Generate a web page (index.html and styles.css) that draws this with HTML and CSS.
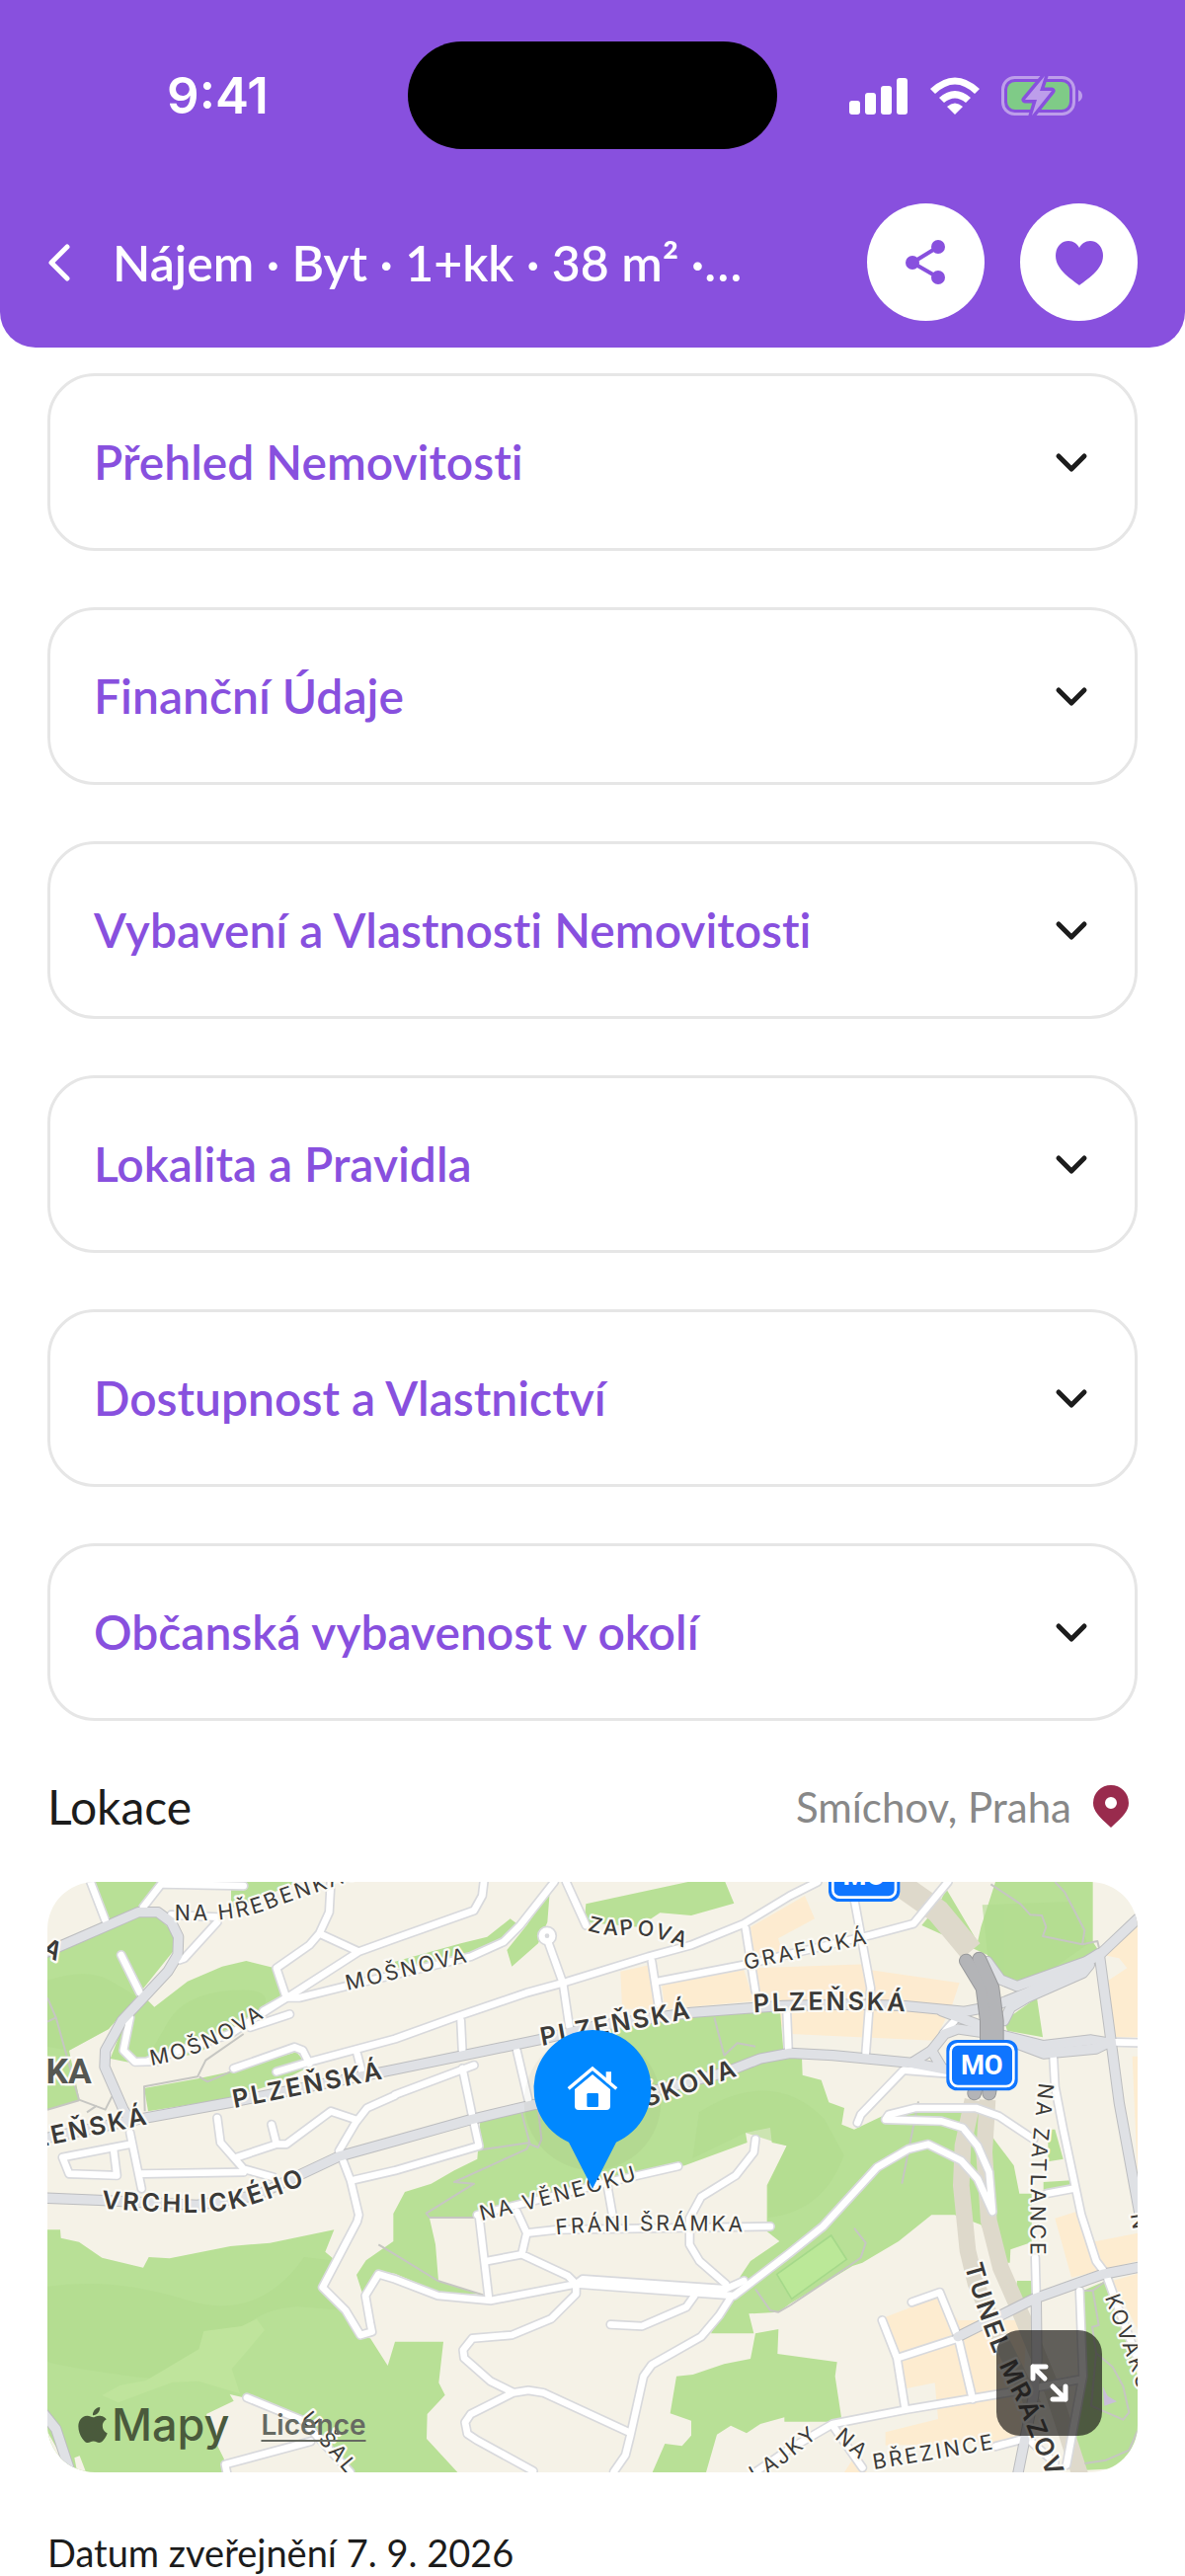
FILE: index.html
```html
<!DOCTYPE html>
<html lang="cs">
<head>
<meta charset="utf-8">
<meta name="viewport" content="width=device-width, initial-scale=1">
<title>Nájem · Byt · 1+kk · 38 m²</title>
<link rel="stylesheet" href="styles.css">
</head>
<body>
<svg class="defs" width="0" height="0" aria-hidden="true">
  <symbol id="chevron" viewBox="0 0 36 36"><path d="M5 12l13 13 13-13" fill="none" stroke="currentColor" stroke-width="5" stroke-linecap="round" stroke-linejoin="round"/></symbol>
</svg>

<header class="top">
  <div class="status">
    <time class="clock">9:41</time>
    <div class="island"></div>
    <div class="indicators">
      <svg width="60" height="40" viewBox="0 0 60 40" fill="#fff" aria-hidden="true">
        <rect x="0" y="25" width="11" height="14" rx="3"/><rect x="16" y="17" width="11" height="22" rx="3"/><rect x="32" y="10" width="11" height="29" rx="3"/><rect x="48" y="2" width="11" height="37" rx="3"/>
      </svg>
      <svg width="50" height="40" viewBox="0 0 50 40" fill="#fff" aria-hidden="true">
        <path d="M0 13Q25-10 50 13L45 18Q25-1 5 18Z"/><path d="M9 22Q25 8 41 22L36 27Q25 18 14 27Z"/><path d="M17 31Q25 24 33 31L25 39Z"/>
      </svg>
      <svg width="83" height="42" viewBox="0 0 83 42" aria-hidden="true">
        <rect x="1.500" y="2.500" width="72" height="37" rx="12" fill="none" stroke="#bd9eea" stroke-width="3"/>
        <path d="M78 15q4 2 4 6t-4 6z" fill="#bd9eea"/>
        <rect x="6" y="7" width="63" height="28" rx="8" fill="#7fcb87"/>
        <path d="M44 1L24 25h12l-5 16 20-25H39z" fill="#bd9eea" stroke="#8850de" stroke-width="7" stroke-linejoin="round" paint-order="stroke"/>
      </svg>
    </div>
  </div>
  <nav class="nav">
    <button class="back" type="button" aria-label="Zpět">
      <svg width="24" height="40" viewBox="0 0 24 40" aria-hidden="true"><path d="M20 4L4 20l16 16" fill="none" stroke="currentColor" stroke-width="5" stroke-linecap="round" stroke-linejoin="round"/></svg>
    </button>
    <h1 class="title">Nájem · Byt · 1+kk · 38 m² ·…</h1>
    <button class="round" type="button" aria-label="Sdílet">
      <svg width="48" height="48" viewBox="0 0 48 48" fill="currentColor" aria-hidden="true"><path d="M36 8L10 24l26 15" fill="none" stroke="currentColor" stroke-width="4"/><circle cx="10" cy="24" r="7"/><circle cx="36" cy="8" r="7"/><circle cx="36" cy="39" r="7"/></svg>
    </button>
    <button class="round" type="button" aria-label="Oblíbené">
      <svg width="48" height="48" viewBox="0 0 48 48" fill="currentColor" aria-hidden="true"><path d="M24 47C18 42 0 32 0 17 0 8 6 2 13 2c5 0 9 3 11 7 2-4 6-7 11-7 7 0 13 6 13 15 0 15-18 25-24 30z"/></svg>
    </button>
  </nav>
</header>

<main class="content">
  <div class="cards">
    <button class="card" type="button" aria-expanded="false"><span>Přehled Nemovitosti</span><svg class="chev" aria-hidden="true"><use href="#chevron"/></svg></button>
    <button class="card" type="button" aria-expanded="false"><span>Finanční Údaje</span><svg class="chev" aria-hidden="true"><use href="#chevron"/></svg></button>
    <button class="card" type="button" aria-expanded="false"><span>Vybavení a Vlastnosti Nemovitosti</span><svg class="chev" aria-hidden="true"><use href="#chevron"/></svg></button>
    <button class="card" type="button" aria-expanded="false"><span>Lokalita a Pravidla</span><svg class="chev" aria-hidden="true"><use href="#chevron"/></svg></button>
    <button class="card" type="button" aria-expanded="false"><span>Dostupnost a Vlastnictví</span><svg class="chev" aria-hidden="true"><use href="#chevron"/></svg></button>
    <button class="card" type="button" aria-expanded="false"><span>Občanská vybavenost v okolí</span><svg class="chev" aria-hidden="true"><use href="#chevron"/></svg></button>
  </div>

  <div class="location">
    <h2 class="heading">Lokace</h2>
    <p class="place">Smíchov, Praha
      <svg width="48" height="48" viewBox="0 0 48 48" aria-hidden="true"><path fill="#992b4d" fill-rule="evenodd" d="M24 2a18 18 0 0 1 18 18c0 8-5 13-18 25C11 33 6 28 6 20A18 18 0 0 1 24 2zm0 12a6 6 0 1 0 0 12 6 6 0 0 0 0-12z"/></svg>
    </p>
  </div>

  <div class="map">
    <svg class="canvas" viewBox="0 0 3312 1794" role="img" aria-label="Mapa okolí">
      <defs>
        <g id="streets">
          <path d="M131 0L176 117M351 0L291 77M351 7L596 12M376 100L516 107M516 122L416 232 401 237"/>
          <path d="M861 0L856 92 826 157 796 192 696 262 726 352M826 157L946 212 1056 172 1296 87 1321 42 1326 0M946 212L736 347 656 392"/>
          <path d="M726 352L766 352 906 317 1286 227 1386 182 1436 132 1540 0M616 442L736 402M336 545L266 547 231 512 251 412M224 222L281 337M726 352L556 462 306 544"/>
          <path d="M566 567L751 502 776 512 796 552M696 577L796 547 1056 477 1236 412 1456 337 1566 307 1826 227 1956 192 2116 127 2256 42 2340 0M941 522L956 580"/>
          <path d="M516 717L526 792 596 872 686 897M681 737L696 797 576 837M696 797L726 797 861 697 936 722M1056 649L971 687 936 732 886 817M1056 647L1296 557"/>
          <path d="M1256 422L1261 522M1261 567L1291 712 1311 802 1056 877 926 907"/>
          <path d="M896 842L921 907 946 1012 941 1032 836 1232 906 1302 951 1377 986 1367 981 1342 966 1257 1006 1192 1056 1207 1186 1257 1346 1272 1606 1222"/>
          <path d="M251 762L286 932M251 797L46 837 66 887 211 892 201 812M286 887L596 882"/>
          <path d="M1576 0L1636 132M1521 182L1566 307 1586 442M1836 242L1856 372M1856 302L2116 252 2500 162 2631 127 2736 0M2451 52L2501 322 2486 522M2121 142L2151 332M2246 392L2251 512M1426 512L1461 662"/>
          <path d="M1916 864L1706 912 1306 1012M1701 922L1716 1007M2151 782L2146 822 2091 892 1986 957 1951 1022 1951 1102 1981 1152 2061 1222M1311 1012L1341 1267"/>
          <path d="M1426 1002L1456 1067 1441 1132 1336 1152M1441 1132L1581 1197 1606 1222 1606 1252 1531 1327 1411 1377 1291 1387 1263 1422 1266 1447 1346 1517 1416 1552 1286 1617 1269 1642 1276 1677 1306 1697 1476 1790M1416 1552L1461 1545 1506 1552 1766 1672"/>
          <path d="M1456 1067L1546 1057 2196 1047M1606 1222L1626 1207 2061 1237 2116 1212M1606 1222L2081 1257"/>
          <path d="M2086 1257L2256 1127 2356 1047 2521 867 2616 812 2676 797 2776 847 2826 902 2871 1002 2861 882 2826 802 2781 747 2716 727 2546 722 2556 707 2636 687 2821 687 2891 712 2996 782"/>
          <path d="M2076 1262L2041 1317 1986 1382 1836 1467 1811 1502 1771 1682 1756 1742 1721 1792M1966 1257L1941 1292 1806 1350 1711 1345"/>
          <path d="M2461 732L2471 707 2601 572 2726 582M3056 532L3061 622 3086 752 3141 1012 3186 1152 3216 1192 3256 1302 3312 1450M3001 1142L3004 1252M3036 947L3116 932M3241 487L3320 489M2756 422L2722 460"/>
          <path d="M2626 1277L2711 1247 2766 1382 2811 1572M2536 1332L2581 1447 2606 1602M2581 1447L2766 1387M2150 1794L2256 1722 2386 1647 2606 1604 2946 1547 3136 1512M2386 1652L2476 1780M2880 1715L2976 1690 3060 1765M3136 1242L3146 1502 3096 1772"/>
          <path d="M606 1567L776 1637 920 1794M545 1794L540 1770 800 1700"/>
        </g>
        <g id="roads">
          <path d="M2856 242L2896 297 2946 317 3156 242 3196 217M2906 422L2926 382 2976 352 3146 277 3166 252M2686 512L2716 562M2626 550L2740 572"/>
          <path d="M-20 221L276 92 336 92 376 122 398 167 396 222 366 272 226 422 176 512 174 562 231 692 256 732"/>
          <path d="M-20 782L256 725 556 670 1056 570 1506 477 1656 440 1956 397 2236 376 2456 372 2606 377 2786 394 2876 377 2976 337 3196 222 3330 95"/>
          <path d="M-20 960L156 967 456 982 636 952 886 834 1056 787 1286 722 1476 677 1816 642 2056 580 2166 537 2256 520 2386 527 2626 550 2686 512 2726 462 2766 447 2906 467 3026 497 3171 480 3230 490"/>
          <path d="M2716 392L2836 437 2946 492 3026 522 3186 507 3226 487M3196 222L3231 482 3256 672 3320 1020M2766 1382L2996 1267 3206 1192 3330 1168M3004 1267L3006 1452 2996 1562 2946 1810M-14 1612L26 1662 75 1810"/>
        </g>
        <g id="tunnel"><path d="M2791 240L2841 322 2854 422 2854 500 2816 642"/><path d="M2831 234L2871 322 2884 422 2884 500 2861 642"/></g>
        <path id="p-hrebenky" d="M386 117L480 117Q600 115 700 72L1000-30"/>
        <path id="p-mosnova1" d="M316 557Q480 535 690 390"/>
        <path id="p-mosnova2" d="M911 330L1330 230"/>
        <path id="p-plzen1" d="M568 687L1060 590"/>
        <path id="p-plzen2" d="M-260 856L312 735"/>
        <path id="p-vrch" d="M164 992Q400 1010 500 1002 640 995 870 875"/>
        <path id="p-zapova" d="M1640 147Q1700 168 1770 160 1860 160 1990 228"/>
        <path id="p-graf" d="M2121 267L2560 173"/>
        <path id="p-plzen3" d="M1502 498L1990 408"/>
        <path id="p-plzen4" d="M2146 397Q2400 380 2680 398"/>
        <path id="p-duskova" d="M1600 722L1840 678 2104 587"/>
        <path id="p-venecku" d="M1318 1030Q1600 965 1860 884"/>
        <path id="p-sramka" d="M1546 1072Q1750 1050 2200 1066"/>
        <path id="p-zatlance" d="M3012 610L2990 830Q2984 1000 2988 1200"/>
        <path id="p-tunel" d="M2786 1165Q2850 1400 2940 1570L3060 1860"/>
        <path id="p-kovaku" d="M3212 1262L3300 1500 3340 1640"/>
        <path id="p-na" d="M2390 1690L2520 1800"/>
        <path id="p-brezince" d="M2511 1785L2930 1714"/>
        <path id="p-lajky" d="M2070 1866L2230 1775 2346 1682"/>
        <path id="p-salam" d="M768 1632L960 1860"/>
      </defs>

      <rect width="3312" height="1794" fill="#f5f2e7"/>

      <g class="shops">
        <path d="M1741 272L1831 252 1856 390 1746 385zM1866 312L2116 267 2146 362 1876 387zM2136 137L2301 42 2331 112 2220 172 2240 230 2150 250zM2146 262L2491 250 2496 267 2771 307 2746 382 2696 482 2256 462 2156 370z"/>
        <path d="M3206 222L3312 112V472H3240L3222 300 3280 262 3256 232zM3296 530H3312V900zM3061 1022L3126 1002 3151 1080 3186 1092 3312 1067V1152L3196 1182 3111 1202zM3236 1212L3312 1190V1360z"/>
        <path d="M2546 1322L2716 1257 2766 1332 2976 1332 2956 1702 2546 1712V1672L2706 1632 2696 1522 2596 1542 2566 1442zM2421 1794L2451 1747 2490 1794z"/>
      </g>

      <g class="parks">
        <path d="M141 0H340L286 80 184 118zM0 222L276 102 336 107 381 152V212L270 350 186 447 66 512 98 664 0 692z"/>
        <path d="M325 380L426 302 531 257 604 240 691 262 718 350 656 392 456 522 266 552 191 537 226 447 290 345zM294 627L461 597 556 577 756 517 796 562 696 612 556 657 306 697zM558 0H760L600 70 558 80z"/>
        <path d="M1056 242L1256 187 1336 167 1406 112 1430 130 1396 182 1306 222 1056 262zM1526 32L1519 122 1491 187 1411 257 1396 207 1456 132zM1636 67L1946 0H2059L2086 65 1956 102 1861 94 1796 137 1631 122z"/>
        <path d="M1676 452L1956 412 2226 392 2236 512 2292 532 2294 587 2351 602 2374 670 2421 687 2413 737 2451 752 2536 712 2656 697H2836L2876 782 2936 862 2953 947H2990V1095L2926 1117 2924 1157H2896L2836 1042 2756 1012H2686L2586 1092 2476 1157 2446 1167 2256 1282 2221 1307 2131 1312 2146 1372H2016L2056 1292 2106 1197 2136 1152 2224 1092 2186 1062V922L2246 802 2201 792 2196 747 2121 762 2126 792 1936 862 1796 892 1306 1022H1161L1179 1102 1188 1212 1316 1252 1200 1250 1056 1190 1010 1182 956 1247 939 1194 968 1150 1051 1092V1008L1086 942 1166 917 1236 877 1306 842 1316 712 1476 682 1500 560z"/>
        <path d="M0 1057H39L41 1082 96 1094 166 1142 291 1172 308 1140 371 1144 556 1107 676 1097 871 1057 844 1124 871 1147 826 1232 906 1302 946 1382 981 1387 1034 1470 1056 1397H1203L1189 1522 1208 1559 1154 1617 1152 1692 1246 1794H0z"/>
        <path d="M1911 1502L1961 1497 2056 1465 2136 1449 2151 1372 2221 1359 2218 1434 2399 1459 2393 1502 2414 1640 2239 1640V1627L2166 1647 2124 1675 2076 1652 2034 1679 2001 1794H1838L1876 1707 1928 1714 1956 1682V1637L1892 1615z"/>
        <path d="M2731 22L2826 182 2836 137 2880 0H3176V182L3196 212 2956 307 2896 302 2856 222 2656 132 2706 72zM2906 422L3006 352 3024 472 2916 452zM3146 1242L3216 1212 3312 1500V1700L3256 1782 3156 1787 3120 1700 3146 1400zM2946 1212H3001V1262L2936 1272zM3040 752H3061L3086 842 3040 850zM3026 912L3111 907 3116 930 3026 935z"/>
      </g>
      <g class="meadow">
        <path d="M0 300Q120 260 190 300T270 350L186 447 66 512 0 500zM370 420Q420 340 560 330T650 392L456 522 300 540zM1980 700Q2200 560 2360 720L2420 830Q2360 1000 2190 1020V922L2246 802 2120 762 1960 840zM0 1230Q200 1200 420 1270T780 1140L860 1150 826 1232 906 1302 760 1290Q600 1300 560 1420T240 1500 0 1450z"/>
        <path d="M2840 70L3110 60 3160 190 3000 300 2900 290 2856 222z"/>
      </g>
      <path d="M166 1560L220 1530 300 1515 460 1420 475 1365 590 1350 636 1328 660 1362 560 1480 585 1555 460 1517 380 1520 215 1582z" fill="#bfe49c"/>
      <path d="M483 1617L566 1577 554 1557 596 1567 776 1642 930 1794H546L536 1752 506 1692zM0 1670L70 1794H0zM82 1750L98 1744 116 1790H90z" fill="#f5f2e7"/>
      <path d="M2216 1192L2381 1074 2428 1147 2261 1267z" fill="#bbe898" stroke="#a5d98a" stroke-width="5"/>
      <path d="M3206 1532L3221 1562 3249 1579 3211 1592z" fill="#c9bfd8"/>

      <g class="underground">
        <path d="M2550-20L2706 90 2806 210" stroke-width="72"/>
        <path d="M2811 662L2781 802 2776 922 2796 1120 2820 1220 2900 1400 3000 1600M2856 662L2846 822 2860 1030 2896 1172 2966 1332 3056 1552 3140 1810"/>
      </g>

      <path class="trail" d="M2026 412L2056 527 2096 490 2151 500M1316 814L1466 792 1456 812 1236 912 1296 917 1151 1007 1161 1020H1306M1441 702L1466 797 1491 807 1501 782 1491 692M0 352L26 412 96 662 176 692 196 652M0 425L26 412M0 692L96 664M120 700L150 680M296 697L294 622 456 592 481 542 596 462M461 592L486 607 556 577M2866 7L2956 67 2986 100 3021 102 3034 137 3024 165 3144 190 3151 147 3091 32 3061 0M3144 190L3190 180 3196 205M1006 1102L1056 1132 1186 1212 1346 1262M2256 1287L2436 1167 2471 1142 2486 1097 2451 1052M2256 1287L2221 1307 2196 1302 2151 1237M2646 667L2596 917M3146 1242H3176L3194 1347 3174 1352 3186 1432 3236 1474 3268 1532 3286 1612 3268 1634 3171 1592 3186 1432M3176 1242L3216 1212M3151 1767L3216 1757 3286 1727 3312 1667"/>

      <use href="#streets" class="street-edge"/>
      <circle cx="1518" cy="164" r="28" fill="#fff" stroke="#d8d9dc" stroke-width="5"/>
      <use href="#roads" class="road-edge"/>
      <use href="#streets" class="street"/>
      <use href="#roads" class="road"/>
      <circle cx="1518" cy="164" r="7" fill="#d8d9dc"/>
      <use href="#tunnel" class="tunnel-edge"/>
      <use href="#tunnel" class="tunnel"/>

      <g class="label">
        <text><textPath href="#p-hrebenky">NA HŘEBENKÁCH</textPath></text>
        <text><textPath href="#p-mosnova1">MOŠNOVA</textPath></text>
        <text><textPath href="#p-mosnova2">MOŠNOVA</textPath></text>
        <text><textPath href="#p-graf">GRAFICKÁ</textPath></text>
        <text><textPath href="#p-venecku">NA VĚNEČKU</textPath></text>
        <text><textPath href="#p-sramka">FRÁNI ŠRÁMKA</textPath></text>
        <text><textPath href="#p-zatlance">NA ZATLANCE</textPath></text>
        <text><textPath href="#p-kovaku">KOVÁKŮ</textPath></text>
        <text><textPath href="#p-na">NA</textPath></text>
        <text><textPath href="#p-brezince">BŘEZINCE</textPath></text>
        <text class="end"><textPath href="#p-lajky" startOffset="100%">LAJKY</textPath></text>
        <text><textPath href="#p-salam">U ŠAL</textPath></text>
        <text transform="translate(3290 1010) rotate(80)">N</text>
      </g>
      <g class="label medium"><text><textPath href="#p-zapova">ZAPOVA</textPath></text></g>
      <g class="label strong">
        <text><textPath href="#p-plzen1">PLZEŇSKÁ</textPath></text>
        <text class="end"><textPath href="#p-plzen2" startOffset="100%">PLZEŇSKÁ</textPath></text>
        <text><textPath href="#p-plzen3">PLZEŇSKÁ</textPath></text>
        <text><textPath href="#p-plzen4">PLZEŇSKÁ</textPath></text>
        <text class="end"><textPath href="#p-duskova" startOffset="100%">DUŠKOVA</textPath></text>
        <text><textPath href="#p-vrch">VRCHLICKÉHO</textPath></text>
        <text><textPath href="#p-tunel">TUNEL MRÁZOVKA</textPath></text>
        <text transform="translate(-22 215) rotate(28)">A</text>
      </g>
      <text class="district" x="134" y="612">VKA</text>

      <g class="shield">
        <g transform="translate(2373 -94)"><rect width="217" height="154" rx="32" fill="#0f75ff"/><rect x="13" y="13" width="191" height="128" rx="22" fill="#0f75ff" stroke="#fff" stroke-width="8"/><text x="108" y="104">MO</text></g>
        <g transform="translate(2731 480)"><rect width="217" height="154" rx="32" fill="#0f75ff"/><rect x="13" y="13" width="191" height="128" rx="22" fill="#0f75ff" stroke="#fff" stroke-width="8"/><text x="108" y="104">MO</text></g>
      </g>

      <circle class="shade" cx="1656" cy="668" r="208"/>
      <path d="M1656 450a178 178 0 0 1 72 341L1656 932 1584 791a178 178 0 0 1 72-341z" fill="#0088ff"/>
      <g transform="translate(1656 628)" fill="#fff">
        <path d="M-69-3L0-61 69-3" fill="none" stroke="#fff" stroke-width="10" stroke-linecap="square"/>
        <path d="M41-51H57V-8L41-20zM0-43L54 2V53Q54 65 42 65H-42Q-54 65-54 53V2z"/>
        <rect x="-17" y="14" width="35" height="42" rx="4" fill="#0088ff"/>
      </g>
    </svg>

    <div class="credit">
      <span class="brand"><svg width="30" height="36" viewBox="2 0 20 24" aria-hidden="true"><path fill="currentColor" d="M12.152 6.896c-.948 0-2.415-1.078-3.960-1.040-2.040.027-3.910 1.183-4.961 3.014-2.117 3.675-.546 9.103 1.519 12.090 1.013 1.454 2.208 3.090 3.792 3.039 1.520-.065 2.090-.987 3.935-.987 1.831 0 2.350.987 3.960.948 1.637-.026 2.676-1.480 3.676-2.948 1.156-1.688 1.636-3.325 1.662-3.415-.039-.013-3.182-1.221-3.220-4.857-.026-3.040 2.480-4.494 2.597-4.559-1.429-2.090-3.623-2.324-4.390-2.376-2-.156-3.675 1.090-4.610 1.090zM15.530 3.830c.843-1.012 1.400-2.427 1.245-3.830-1.207.052-2.662.805-3.532 1.818-.780.896-1.454 2.338-1.273 3.714 1.338.104 2.715-.688 3.559-1.701"/></svg>Mapy</span>
      <a class="legal" href="#licence">Licence</a>
    </div>
    <button class="expand" type="button" aria-label="Zvětšit mapu">
      <svg width="48" height="48" viewBox="0 0 48 48" aria-hidden="true"><path d="M19 19L7 7M7 19V7h13M27 27l13 13M40 27v13H27" fill="none" stroke="#fff" stroke-width="5" stroke-linecap="round" stroke-linejoin="round"/></svg>
    </button>
  </div>

  <p class="date">Datum zveřejnění 7. 9. 2026</p>
</main>
</body>
</html>
```
FILE: styles.css
```css
* { box-sizing: border-box; }

body {
  margin: 0;
  background: #fff;
  color: #1c1c1c;
  font-family: Lato, "Open Sans", sans-serif;
  font-variant-ligatures: none;
}

button { font: inherit; border: 0; padding: 0; cursor: pointer; }
h1, h2, p { margin: 0; font-weight: 400; }
.defs { position: absolute; }

/* Header */
.top {
  background: #8850de;
  color: #fff;
  border-radius: 0 0 36px 36px;
  padding: 42px 0 27px;
}
.status {
  display: grid;
  grid-template-columns: 1fr 374px 1fr;
  align-items: center;
}
.clock {
  padding-left: 28px;
  text-align: center;
  font: 600 51px/60px Inter, sans-serif;
}
.island { height: 109px; border-radius: 55px; background: #000; }
.indicators {
  display: flex;
  justify-content: center;
  align-items: center;
  gap: 22px;
  padding-right: 31px;
}
.nav {
  display: flex;
  align-items: center;
  gap: 36px;
  margin-top: 55px;
  padding: 0 48px;
}
.back { display: flex; background: none; color: inherit; }
.title {
  flex: 1;
  padding-left: 6px;
  font-size: 50px;
  line-height: 64px;
  font-weight: 600;
  white-space: nowrap;
}
.round {
  display: flex;
  align-items: center;
  justify-content: center;
  width: 119px;
  height: 119px;
  border-radius: 50%;
  background: #fff;
  color: #8850de;
}

/* Sections */
.content { padding: 26px 48px 0; }
.cards { display: grid; gap: 57px; }
.card {
  display: flex;
  align-items: center;
  justify-content: space-between;
  padding: 57px 46px 57px 44px;
  border: 3px solid #e6e6e6;
  border-radius: 48px;
  background: #fff;
  color: #8850de;
  font-size: 48px;
  line-height: 60px;
  font-weight: 600;
  text-align: left;
}
.chev { width: 36px; height: 36px; color: #1c1c1c; }

.location {
  display: flex;
  align-items: center;
  justify-content: space-between;
  margin: 57px 0 46px;
}
.heading { font-size: 48px; line-height: 60px; }
.place {
  display: flex;
  align-items: center;
  gap: 16px;
  padding-right: 3px;
  color: #888;
  font-size: 42px;
  line-height: 60px;
}

/* Map */
.map { position: relative; border-radius: 48px; overflow: hidden; }
.canvas { display: block; width: 100%; height: auto; }
.parks { fill: #b8e096; }
.meadow { fill: #b0db8e; opacity: .6; }
.shops { fill: #fdecd0; }
.underground { fill: none; stroke: #ded9cb; stroke-width: 50; }
.trail { fill: none; stroke: #c6c6c2; stroke-width: 6; stroke-linejoin: round; }
.street-edge, .street, .road-edge, .road, .tunnel-edge, .tunnel {
  fill: none;
  stroke-linecap: round;
  stroke-linejoin: round;
}
.street-edge { stroke: #d8d9dc; stroke-width: 30; }
.street { stroke: #fff; stroke-width: 20; }
.road-edge { stroke: #bcbdbf; stroke-width: 34; }
.road { stroke: #dfe1e5; stroke-width: 28; }
.tunnel-edge { stroke: #98999b; stroke-width: 44; }
.tunnel { stroke: #b3b4b7; stroke-width: 38; }
.shade { fill: #5a6a3a; opacity: .05; }

.label {
  font-family: Inter, sans-serif;
  font-size: 64px;
  letter-spacing: 8px;
  fill: #3b3a38;
  stroke: #fbfaf5;
  stroke-width: 14;
  stroke-linejoin: round;
  paint-order: stroke;
}
.medium { font-weight: 500; }
.strong { font-size: 76px; font-weight: 600; }
.end { text-anchor: end; }
.district {
  font: 700 106px Roboto, sans-serif;
  text-anchor: end;
  fill: #555752;
  stroke: #fbfaf5;
  stroke-width: 14;
  paint-order: stroke;
}
.shield text {
  font: 700 82px Roboto, sans-serif;
  text-anchor: middle;
  fill: #fff;
}

.credit {
  position: absolute;
  left: 31px;
  bottom: 20px;
  display: flex;
  align-items: center;
  gap: 32px;
  font-family: Inter, sans-serif;
}
.brand {
  display: flex;
  align-items: center;
  gap: 4px;
  color: #4a5a3c;
  font-size: 45px;
  line-height: 56px;
  font-weight: 500;
}
.legal {
  color: #666a62;
  font-size: 28px;
  line-height: 32px;
  font-weight: 600;
  text-underline-offset: 5px;
}
.expand {
  position: absolute;
  right: 36px;
  bottom: 37px;
  display: flex;
  align-items: center;
  justify-content: center;
  width: 107px;
  height: 107px;
  border-radius: 24px;
  background: rgba(26, 25, 23, .68);
}

.date { margin-top: 57px; font-size: 38px; line-height: 48px; }
```
